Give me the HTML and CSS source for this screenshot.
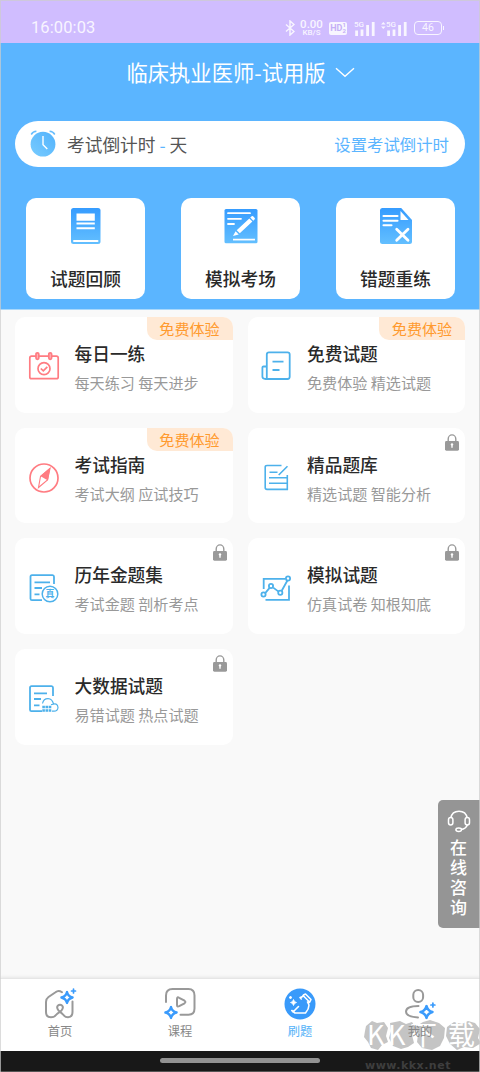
FILE: index.html
```html
<!DOCTYPE html>
<html lang="zh-CN">
<head>
<meta charset="utf-8">
<title>临床执业医师-试用版</title>
<link rel="stylesheet" href="styles.css">
</head>
<body>
<svg width="0" height="0" class="defs">
  <defs>
    <linearGradient id="blue" x1="0" y1="0" x2="0" y2="1"><stop offset="0" stop-color="#369cff"/><stop offset="1" stop-color="#63bfff"/></linearGradient>
    <linearGradient id="clock" x1="1" y1="0" x2="0" y2="1"><stop offset="0" stop-color="#52b2fc"/><stop offset="1" stop-color="#78ccff"/></linearGradient>
    <symbol id="lock" viewBox="0 0 14 17"><path d="M3.200 8V5a3.800 4.100 0 0 1 7.600 0v3" fill="none" stroke="#999" stroke-width="1.400"/><rect y="7" width="14" height="9.700" rx="1.400" fill="#999"/><path d="M7 9.200a1.300 1.300 0 0 1 .7 2.400v2.200H6.300v-2.200A1.300 1.300 0 0 1 7 9.200z" fill="#fff"/></symbol>
    <symbol id="spark" viewBox="0 0 12 12"><path d="M6 1.200Q6.900 5.100 10.800 6Q6.900 6.900 6 10.800Q5.100 6.900 1.200 6Q5.100 5.100 6 1.200z" fill="#fff" stroke="#3a9bfc" stroke-width="2" stroke-linejoin="round"/></symbol>
  </defs>
</svg>
<div class="app">
  <header class="status">
    <span class="time">16:00:03</span>
    <div class="status-icons">
      <svg class="bt" width="10" height="16" viewBox="0 0 10 16"><path d="M1 4.500l8 7-4 3.500V1l4 3.500-8 7" fill="none" stroke="#fff" stroke-width="1.500"/></svg>
      <div class="speed"><b>0.00</b><small>KB/S</small></div>
      <div class="hd">HD<span><i>1</i><i>2</i></span></div>
      <div class="signal sig1"><em>5G</em><svg width="20" height="14"><path d="M1.600 14V8.500M7 14V7.500M12.600 14V3M18.200 14V0" stroke="#fff" stroke-width="2.800"/></svg></div>
      <div class="signal sig2"><em>5G</em><svg width="26" height="14"><path d="M7.600 14V8.500M13 14V7.500M18.600 14V3M24.200 14V0" stroke="#fff" stroke-width="2.800"/><path d="M0 2.500L2.300 0l2.300 2.500zM0 4.500L2.300 7l2.300-2.500z" fill="#fff"/></svg></div>
      <div class="battery">46</div>
    </div>
  </header>
  <section class="hero">
    <h1>临床执业医师-试用版<svg width="20" height="11" viewBox="0 0 20 11"><path d="M1 1.200l9 8 9-8" fill="none" stroke="#fff" stroke-width="1.400"/></svg></h1>
    <div class="countdown">
      <svg width="26" height="28" viewBox="0 0 26 28"><circle cx="13" cy="15.200" r="12.400" fill="url(#clock)"/><path d="M1.200 5.500Q3 2.600 6.400 2.300M24.800 5.500Q23 2.600 19.600 2.300" fill="none" stroke="#66bdfd" stroke-width="1.500"/><path d="M13 7v8.700l4.300 4.300" fill="none" stroke="#fff" stroke-width="1.400"/></svg>
      <span class="label">考试倒计时 <i>-</i> 天</span>
      <a>设置考试倒计时</a>
    </div>
    <div class="actions">
      <div class="action"><svg width="36" height="38" viewBox="0 0 36 38"><rect x="3" y="1" width="29.500" height="36" rx="2.500" fill="url(#blue)"/><path d="M8.500 6.500h18.300v7.300H8.500zM8.500 15.600h18.300v2H8.500zM8.500 20.200h18.300v2H8.500z" fill="#fff"/><path d="M6 34h23.500" stroke="#fff" stroke-width="2" stroke-linecap="round"/></svg><b>试题回顾</b></div>
      <div class="action"><svg width="36" height="38" viewBox="0 0 36 38"><rect x="1.500" y="2" width="33" height="34.300" rx="1.500" fill="url(#blue)"/><path d="M5 6.200h22M5 11.800h13M5 17h6" stroke="#fff" stroke-width="1.800" stroke-linecap="round"/><path d="M13.700 23.200L26.300 11.500l3.100 3L16.800 26.300zM27.200 10.600l1.500-1.400q.7-.5 1.400.1l1.600 1.600q.6.700 0 1.400l-1.400 1.400zM12.600 24.200l3.200 3.200-5.800 1.700z" fill="#fff"/><path d="M10 32.600h22" stroke="#fff" stroke-width="1.700"/></svg><b>模拟考场</b></div>
      <div class="action"><svg width="36" height="38" viewBox="0 0 36 38"><path d="M4.500 1h18.700L34 13v21.500Q34 37 31.500 37h-27Q2 37 2 34.500v-31Q2 1 4.500 1z" fill="url(#blue)"/><path d="M22.500 4v9h8z" fill="#fff"/><path d="M5.500 9h14M5.500 13.700h14M5.500 18.300h8" stroke="#fff" stroke-width="2.100" stroke-linecap="round"/><path d="M18.700 22.300l11.300 11M30 22.300l-11.300 11" stroke="#fff" stroke-width="2.800" stroke-linecap="round"/></svg><b>错题重练</b></div>
    </div>
  </section>
  <main class="grid">
    <article class="card"><svg class="pic red" viewBox="0 0 32 32"><rect x="1.800" y="5.200" width="28.400" height="22.500" rx="1.800"/><rect x="8" y="1.800" width="2.800" height="6.500" rx="1.300" fill="#ffb6ba"/><rect x="20.800" y="1.800" width="2.800" height="6.500" rx="1.300" fill="#ffb6ba"/><circle cx="16" cy="17.700" r="6"/><path d="M12.800 17.500l2.500 2.400 4-4"/></svg><div class="text"><h2>每日一练</h2><p>每天练习 每天进步</p></div><span class="tag">免费体验</span></article>
    <article class="card"><svg class="pic" viewBox="0 0 32 32"><path d="M6.800 28V3.500Q6.800 1.300 9 1.300h18.500Q29.700 1.300 29.700 3.500v22.300Q29.700 28 27.500 28h-22Q2.400 28 2.400 25.500v-9Q2.400 15.500 3.500 15.500h3.300M12.500 10.700h11M12.500 19h7"/></svg><div class="text"><h2>免费试题</h2><p>免费体验 精选试题</p></div><span class="tag">免费体验</span></article>
    <article class="card"><svg class="pic red" viewBox="0 0 32 32"><circle cx="16" cy="16" r="14"/><path d="M22.300 5.500L12.200 14l7.800 4.500z" fill="#ff7c82" stroke="none"/><path d="M22 6.500l-9.500 8L10.500 25.500l9-7.500z" stroke-width="1.100"/></svg><div class="text"><h2>考试指南</h2><p>考试大纲 应试技巧</p></div><span class="tag">免费体验</span></article>
    <article class="card"><svg class="pic" viewBox="0 0 32 32"><path d="M21.500 3.500H7Q5.200 3.500 5.200 5v20.500Q5.200 27.400 7 27.400h20.300V13M9.500 10.300h8M9 15.800h18M9 21.200h18M18.700 13l8.800-8.800" stroke-width="1.600"/></svg><div class="text"><h2>精品题库</h2><p>精选试题 智能分析</p></div><svg class="lock"><use href="#lock"/></svg></article>
    <article class="card"><svg class="pic" viewBox="0 0 32 32"><path d="M26 12V4.800Q26 3.200 24.500 3.200H4Q2.500 3.200 2.500 4.800v21.900Q2.500 28.200 4 28.200H14M6.500 10.300H22M6.500 16h7.500M6.500 22.300h5"/><circle cx="22" cy="22" r="7.800" stroke-width="1.500"/><text x="22" y="25.300">真</text></svg><div class="text"><h2>历年金题集</h2><p>考试金题 剖析考点</p></div><svg class="lock"><use href="#lock"/></svg></article>
    <article class="card"><svg class="pic" viewBox="0 0 32 32"><path d="M3.700 17V6.800H25M5.500 27.800h23.500V13.500M5 21.400l4.600-5.500M13.200 15.600l5.400 4M21.700 18.800l6-10.800"/><circle cx="3.500" cy="22.500" r="2.100"/><circle cx="11" cy="14" r="2.100"/><circle cx="20.300" cy="20.700" r="2.100"/><circle cx="28" cy="6.500" r="2.100"/></svg><div class="text"><h2>模拟试题</h2><p>仿真试卷 知根知底</p></div><svg class="lock"><use href="#lock"/></svg></article>
    <article class="card"><svg class="pic" viewBox="0 0 32 32"><path d="M25 13V4.800Q25 3.200 23.500 3.200H3.500Q2 3.200 2 4.800v21.900Q2 28.200 3.500 28.200H14M6 10.300H19M6 16h7M6 22.300h5.500"/><path d="M14.500 20.500Q15.500 15.600 20 15.600t5.500 6M23 21.800Q29.800 19 30 24.500 29.700 28.200 26 28.200h-2" stroke-width="1.200"/><path d="M14.300 24h9M14.300 27.500h9" stroke-width="2.500" stroke-dasharray="2.600 .6"/></svg><div class="text"><h2>大数据试题</h2><p>易错试题 热点试题</p></div><svg class="lock"><use href="#lock"/></svg></article>
  </main>
  <nav class="tabs">
    <a><svg width="34" height="34" viewBox="0 0 34 34" class="ti"><path d="M19 5.200Q15.500 2.700 12.500 5.200L5.500 10Q3 11.800 3 15v10Q3 30.300 8 30.300 11.500 30.300 14 27L18.500 23.500Q20.800 20.500 19.300 18.800 17 16.800 14.700 18.800 13.300 20.500 15.500 23.500L19.500 27Q22 30.300 25 30.300 29.500 30 29.500 25V14.500"/><use href="#spark" x="17" y="3.500" width="14" height="14"/><path class="plus" d="M30.500 2v4M28.500 4h4"/></svg><span>首页</span></a>
    <a><svg width="34" height="34" viewBox="0 0 34 34" class="ti"><path d="M3 15V8.500Q3 2 9.500 2H25.500Q31.500 2 31.500 8.500V21.500Q31.500 27.700 25.500 27.700H17.500"/><path d="M14 12Q14 9.500 16.200 10.800L21.500 13.700Q23.300 15 21.500 16.300L16.200 19.200Q14 20.300 14 18z"/><use href="#spark" x="1" y="18.500" width="14" height="14"/></svg><span>课程</span></a>
    <a class="on"><svg width="34" height="34" viewBox="0 0 34 34"><circle cx="17" cy="17" r="15.500" fill="#399afa"/><g fill="none" stroke="#fff" stroke-width="1.600" stroke-linejoin="round" stroke-linecap="round"><path d="M18.300 12L17 10.500Q20 10 20.500 8L22.500 7 28 12.500 26.500 15.500 24.500 15 26 18Q26 22 22.500 26H12L8.800 23.500M10 25L15.500 19.500M20.500 9L26.500 15"/></g><path d="M10.500 12.500q.5 2.500 3 3-2.500.5-3 3-.5-2.500-3-3 2.500-.500 3-3zM7.500 9q.3 1.200 1.500 1.500-1.200.300-1.500 1.500-.300-1.200-1.500-1.500 1.200-.300 1.500-1.500z" fill="#fff" stroke="#fff" stroke-width=".8"/></svg><span>刷题</span></a>
    <a><svg width="34" height="34" viewBox="0 0 34 34" class="ti"><rect x="10.300" y="3" width="9.800" height="12" rx="4.800"/><path d="M15.500 19Q3 19 3 24.700 3 29.500 15 30.500"/><use href="#spark" x="16" y="17.500" width="15" height="15"/><path class="plus" d="M29.900 16v4M27.900 18h4"/></svg><span>我的</span></a>
  </nav>
  <footer class="system"><i></i></footer>
  <aside class="service"><svg width="24" height="23" viewBox="0 0 24 23"><g fill="none" stroke="#fff" stroke-width="1.500"><path d="M3.800 8Q5 1.200 12 1.200T20.200 8M20.500 14.500Q19 19 14 19.500"/><rect x="1.500" y="7.500" width="4.400" height="7.500" rx="2.200"/><rect x="18.100" y="7.500" width="4.400" height="7.500" rx="2.200"/><ellipse cx="11.700" cy="19.700" rx="2.800" ry="1.700"/></g></svg><span>在线咨询</span></aside>
  <div class="watermark"><svg width="118" height="34" viewBox="0 0 118 34"><g fill="#bdbdbd" opacity=".88"><path d="M3 8L9 3 14 5 21 4 25 10 23 18 25 24 19 27 15 32 8 30 5 24 1 19 2 13z"/><path d="M27 5L37 3 43 6 49 4 53 10 49 17 51 25 45 29 38 31 30 28 26 20 28 13z"/><path d="M52 9L60 4 67 2 76 5 82 10 81 20 77 28 69 32 59 30 54 24 55 17z"/><path d="M84 9L91 4 99 6 105 3 112 5 117 11 115 20 118 25 110 30 101 29 94 32 87 26 83 18z"/></g></svg><strong><span>K</span><span>K</span><span>下</span><span>载</span></strong><small>www.kkx.net</small></div>
</div>
</body>
</html>
```

FILE: styles.css
```css
* { box-sizing: border-box; }
body { margin: 0; font-family: "Noto Sans CJK SC", sans-serif; }
h1, h2, p { margin: 0; font-weight: 400; }
i, em { font-style: normal; }
.defs { position: absolute; }
.app { position: relative; display: flex; flex-direction: column; width: 480px; height: 1072px; overflow: hidden; background: #f9f9f9; }
.app::after { content: ""; position: absolute; inset: 0; border: 1px solid rgba(205, 205, 205, .7); border-bottom-width: 0; pointer-events: none; }
.status { flex: none; height: 43px; padding: 12px 38px 0 31px; display: flex; justify-content: space-between; background: #d0bdff; color: #fff; font-family: Roboto, sans-serif; }
.time { font: 16.500px/32px Roboto, sans-serif; opacity: .85; letter-spacing: .1px; }
.status-icons { display: flex; align-items: center; height: 32px; opacity: .85; }
.bt { margin-right: 5px; }
.speed { width: 23px; display: flex; flex-direction: column; align-items: center; margin-right: 6px; }
.speed b { font-size: 11.500px; line-height: 9px; font-weight: 500; }
.speed small { font-size: 8px; font-weight: 500; line-height: 8px; }
.hd { width: 18px; height: 13px; border-radius: 2px; background: #fff; color: #c3adf5; font: 700 9px/13px Roboto, sans-serif; display: flex; justify-content: center; margin-right: 8px; }
.hd span { display: flex; flex-direction: column; font-size: 6px; line-height: 6.500px; }
.signal { position: relative; display: flex; align-items: flex-end; height: 15px; }
.signal em { position: absolute; top: -1px; font: 500 8px/9px Roboto, sans-serif; }
.sig1 { margin-right: 6px; }
.sig1 em { left: -1px; }
.sig2 { margin-right: 7px; }
.sig2 em { left: 5px; }
.battery { position: relative; width: 28px; height: 13.500px; border: 1px solid #fff; border-radius: 4px; font: 10.500px/12px Roboto, sans-serif; text-align: center; }
.battery::after { content: ""; position: absolute; right: -3px; top: 4px; width: 1.500px; height: 4px; background: #fff; }
.hero { flex: none; height: 267px; background: #5bb5ff; display: flex; flex-direction: column; border-bottom: 1px solid #a9d8fb; }
h1 { height: 60px; padding: 0 0 4px 1px; display: flex; align-items: center; justify-content: center; font-size: 21.300px; color: #fff; }
h1 svg { margin: 2px 0 0 9px; }
.countdown { height: 46px; margin: 18px 15px 0; padding: 0 16px 2px; border-radius: 23px; background: #fff; display: flex; align-items: center; }
.countdown svg { margin-left: -1px; }
.countdown .label { margin: 2px 0 0 11px; font-size: 17.700px; color: #555; }
.countdown i { color: #5bb5ff; }
.countdown a { margin: 2px 0 0 auto; font-size: 16.400px; color: #5bb5ff; }
.actions { margin: 31px 25px 0 26px; display: flex; justify-content: space-between; }
.action { width: 119px; height: 101px; border-radius: 10px; background: #fff; display: flex; flex-direction: column; align-items: center; padding-top: 9px; }
.action b { margin-top: 20px; line-height: 26px; font-size: 17.700px; font-weight: 500; color: #2a2a2a; }
.grid { flex: 1; padding: 7px 15px 0; display: grid; grid-template-columns: 1fr 1fr; grid-auto-rows: 95.700px; gap: 15px; }
.card { position: relative; display: flex; border-radius: 10px; background: #fff; padding-left: 12.500px; overflow: hidden; }
.pic { width: 32px; height: 32px; margin-top: 34px; fill: none; stroke: #4db1eb; stroke-width: 1.800; flex: none; }
.red { stroke: #ff7c82; stroke-width: 1.700; }
.pic text { font-size: 9px; text-anchor: middle; fill: #4db1eb; stroke: none; font-weight: 700; }
.text { margin: 23px 0 0 15px; white-space: nowrap; }
h2 { font-size: 17.700px; line-height: 26px; font-weight: 500; color: #2a2a2a; }
.text p { margin-top: 5px; font-size: 15.100px; line-height: 22px; color: #999; }
.tag { position: absolute; top: 0; right: 0; width: 86px; height: 23px; border-radius: 0 0 0 10px; background: #ffe9d5; color: #ff9a2e; font-size: 15.100px; line-height: 23px; text-align: center; }
.lock { position: absolute; top: 6px; right: 6px; width: 14px; height: 17px; }
.tabs { flex: none; height: 73px; background: #fff; border-top: 1px solid #e6e6e6; box-shadow: 0 -1px 3px rgba(0, 0, 0, .08); display: grid; grid-template-columns: repeat(4, 1fr); }
.tabs a { display: flex; flex-direction: column; align-items: center; padding-top: 8px; font-size: 12.300px; line-height: 18px; color: #888; }
.tabs a span { position: relative; z-index: 2; margin-top: 1px; }
.ti { fill: none; stroke: #999; stroke-width: 2; stroke-linecap: round; }
.ti .plus { stroke: #3a9bfc; stroke-width: 1.700; }
.tabs .on { color: #55b2f8; }
.system { flex: none; height: 21px; background: #181818; padding-top: 7px; border-bottom: 1px solid #555; }
.system i { display: block; width: 160px; height: 5px; margin: 0 auto; border-radius: 3px; background: #929292; }
.service { position: absolute; right: 0; top: 800px; width: 42px; height: 128px; border-radius: 5px 0 0 5px; background: #959595; display: flex; flex-direction: column; align-items: center; padding-top: 10px; color: #fff; }
.service span { width: 18px; margin-top: 4px; font-size: 17px; line-height: 20px; font-weight: 500; }
.watermark { position: absolute; left: 363px; top: 1018px; width: 118px; height: 54px; }
.watermark strong { position: absolute; left: 4px; top: 1px; display: grid; grid-template-columns: 21px 22px 38px 30px; font-size: 27px; line-height: 30px; font-weight: 400; color: #fff; white-space: nowrap; }
.watermark small { position: absolute; left: 2px; top: 41px; font: 700 11px/14px "DejaVu Sans", sans-serif; letter-spacing: .5px; color: #3e3e3e; }
```
